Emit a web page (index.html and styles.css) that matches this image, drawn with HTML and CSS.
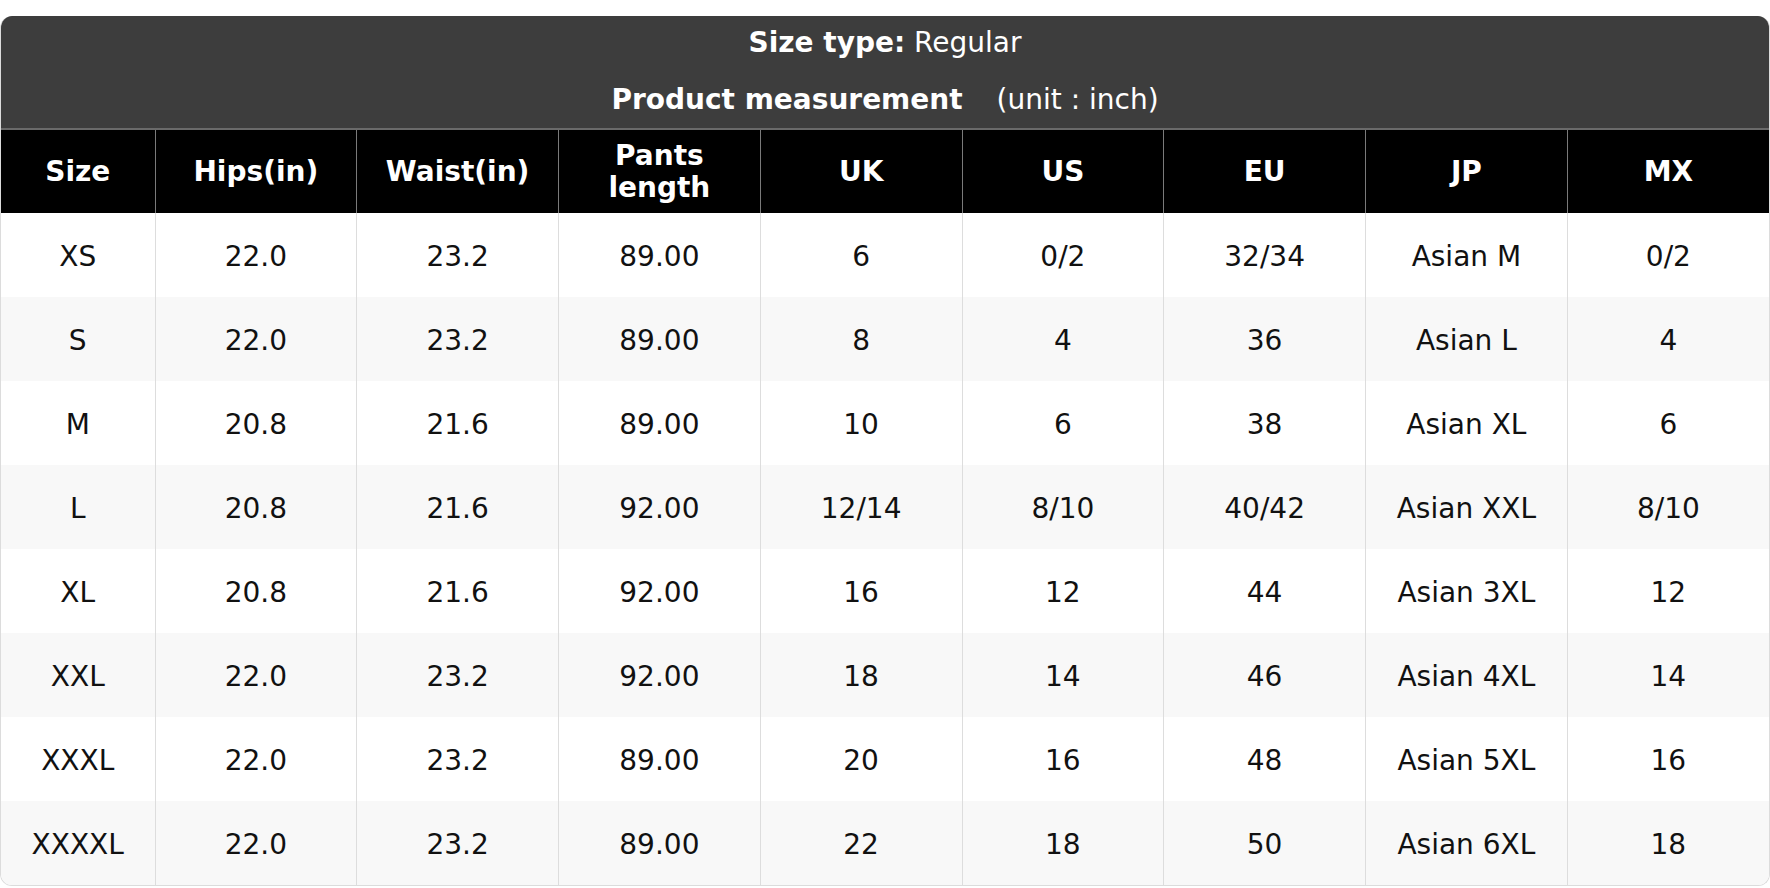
FILE: index.html
```html
<!DOCTYPE html>
<html>
<head>
<meta charset="utf-8">
<link rel="stylesheet" href="styles.css">
</head>
<body>
<div class="card">
  <div class="title">
    <div class="line"><b>Size type:</b> Regular</div>
    <div class="line"><b>Product measurement</b><span class="unit">(unit : inch)</span></div>
  </div>
  <table class="chart">
    <colgroup>
      <col class="c-size"><col><col><col><col><col><col><col><col>
    </colgroup>
    <thead>
      <tr><th>Size</th><th>Hips(in)</th><th>Waist(in)</th><th>Pants<br>length</th><th>UK</th><th>US</th><th>EU</th><th>JP</th><th>MX</th></tr>
    </thead>
    <tbody>
      <tr><td>XS</td><td>22.0</td><td>23.2</td><td>89.00</td><td>6</td><td>0/2</td><td>32/34</td><td>Asian M</td><td>0/2</td></tr>
      <tr><td>S</td><td>22.0</td><td>23.2</td><td>89.00</td><td>8</td><td>4</td><td>36</td><td>Asian L</td><td>4</td></tr>
      <tr><td>M</td><td>20.8</td><td>21.6</td><td>89.00</td><td>10</td><td>6</td><td>38</td><td>Asian XL</td><td>6</td></tr>
      <tr><td>L</td><td>20.8</td><td>21.6</td><td>92.00</td><td>12/14</td><td>8/10</td><td>40/42</td><td>Asian XXL</td><td>8/10</td></tr>
      <tr><td>XL</td><td>20.8</td><td>21.6</td><td>92.00</td><td>16</td><td>12</td><td>44</td><td>Asian 3XL</td><td>12</td></tr>
      <tr><td>XXL</td><td>22.0</td><td>23.2</td><td>92.00</td><td>18</td><td>14</td><td>46</td><td>Asian 4XL</td><td>14</td></tr>
      <tr><td>XXXL</td><td>22.0</td><td>23.2</td><td>89.00</td><td>20</td><td>16</td><td>48</td><td>Asian 5XL</td><td>16</td></tr>
      <tr><td>XXXXL</td><td>22.0</td><td>23.2</td><td>89.00</td><td>22</td><td>18</td><td>50</td><td>Asian 6XL</td><td>18</td></tr>
    </tbody>
  </table>
</div>
</body>
</html>
```
FILE: styles.css
```css
html, body {
  margin: 0;
  padding: 0;
  background: #fff;
}
body {
  padding-top: 16px;
  font-family: "DejaVu Sans", Verdana, sans-serif;
  font-size: 28px;
  color: #111;
}
.card {
  border: 1px solid #dcdcdc;
  border-top: none;
  border-radius: 12px;
  overflow: hidden;
  background: #fff;
}
.title {
  background: #3d3d3d;
  color: #fff;
  text-align: center;
  border-bottom: 2px solid #6a6a6a;
}
.title .line {
  height: 56px;
  line-height: 56px;
}
.title .line:first-child {
  line-height: 54px;
}
.title .unit {
  margin-left: 34px;
}
.chart {
  width: 100%;
  border-collapse: collapse;
  table-layout: fixed;
}
.chart col.c-size {
  width: 154px;
}
.chart th {
  background: #000;
  color: #fff;
  font-weight: bold;
  height: 83px;
  padding: 0;
  border-left: 1px solid #7a7a7a;
  line-height: 32px;
}
.chart th:first-child,
.chart td:first-child {
  border-left: none;
}
.chart td {
  height: 84px;
  padding: 0;
  padding-top: 2px;
  box-sizing: border-box;
  text-align: center;
  border-left: 1px solid #dddddd;
}
.chart tbody tr:nth-child(even) td {
  background: #f8f8f8;
}
```
